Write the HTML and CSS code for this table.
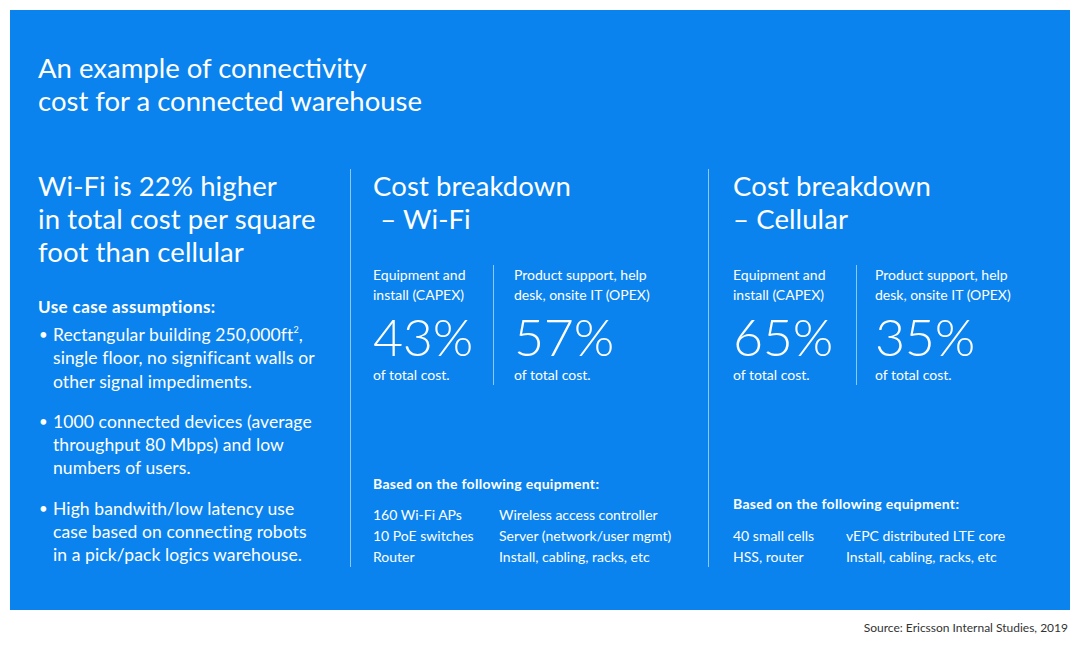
FILE: index.html
```html
<!DOCTYPE html>
<html lang="en">
<head>
<meta charset="utf-8">
<title>Connectivity cost for a connected warehouse</title>
<link rel="stylesheet" href="styles.css">
</head>
<body>
<main class="page">
  <section class="panel">
    <h1 class="title">An example of connectivity<br>cost for a connected warehouse</h1>
    <div class="columns">
      <div class="col col-summary">
        <h2 class="heading">Wi-Fi is 22% higher<br>in total cost per square<br>foot than cellular</h2>
        <p class="assume-title">Use case assumptions:</p>
        <ul class="bullets">
          <li>Rectangular building 250,000ft<sup>2</sup>,<br>single floor, no significant walls or<br>other signal impediments.</li>
          <li>1000 connected devices (average<br>throughput 80&nbsp;Mbps) and low<br>numbers of users.</li>
          <li>High bandwith/low latency use<br>case based on connecting robots<br>in a pick/pack logics warehouse.</li>
        </ul>
      </div>

      <div class="col col-breakdown">
        <h2 class="heading">Cost breakdown<br>&nbsp;– Wi-Fi</h2>
        <div class="stats">
          <div class="stat stat-capex">
            <p class="stat-label">Equipment and<br>install (CAPEX)</p>
            <p class="stat-value">43%</p>
            <p class="stat-note">of total cost.</p>
          </div>
          <div class="stat stat-opex">
            <p class="stat-label">Product support, help<br>desk, onsite IT (OPEX)</p>
            <p class="stat-value">57%</p>
            <p class="stat-note">of total cost.</p>
          </div>
        </div>
        <div class="equip">
          <p class="equip-title">Based on the following equipment:</p>
          <div class="equip-grid equip-wifi">
            <span>160 Wi-Fi APs</span><span>Wireless access controller</span>
            <span>10 PoE switches</span><span>Server (network/user mgmt)</span>
            <span>Router</span><span>Install, cabling, racks, etc</span>
          </div>
        </div>
      </div>

      <div class="col col-breakdown col-cell">
        <h2 class="heading">Cost breakdown<br>– Cellular</h2>
        <div class="stats">
          <div class="stat stat-capex">
            <p class="stat-label">Equipment and<br>install (CAPEX)</p>
            <p class="stat-value">65%</p>
            <p class="stat-note">of total cost.</p>
          </div>
          <div class="stat stat-opex">
            <p class="stat-label">Product support, help<br>desk, onsite IT (OPEX)</p>
            <p class="stat-value">35%</p>
            <p class="stat-note">of total cost.</p>
          </div>
        </div>
        <div class="equip">
          <p class="equip-title">Based on the following equipment:</p>
          <div class="equip-grid equip-cell">
            <span>40 small cells</span><span>vEPC distributed LTE core</span>
            <span>HSS, router</span><span>Install, cabling, racks, etc</span>
          </div>
        </div>
      </div>
    </div>
  </section>
  <p class="source">Source: Ericsson Internal Studies, 2019</p>
</main>
</body>
</html>
```

FILE: styles.css
```css
* { box-sizing: border-box; }

html, body {
  margin: 0;
  padding: 0;
  background: #ffffff;
}

body {
  font-family: "Lato", "Open Sans", "Liberation Sans", sans-serif;
  color: #ffffff;
}

.page {
  width: 1080px;
  height: 645px;
  padding: 10px 10px 0 10px;
}

.panel {
  width: 1060px;
  height: 600px;
  background: #0a83ee;
  padding: 41px 0 0 28px;
}

.title {
  margin: 0;
  font-weight: 400;
  font-size: 27.5px;
  line-height: 33px;
}

.columns {
  display: grid;
  grid-template-columns: 312px 358px 362px;
  margin-top: 52px;
}

.col {
  display: flex;
  flex-direction: column;
}

.col-breakdown {
  border-left: 1px solid rgba(255, 255, 255, 0.55);
  padding-left: 22px;
}

.col-cell {
  padding-left: 24px;
}

.heading {
  margin: 0;
  font-weight: 400;
  font-size: 27.5px;
  line-height: 33px;
  letter-spacing: 0.1px;
}

.assume-title {
  margin: 28px 0 0 0;
  font-weight: 700;
  font-size: 17px;
  line-height: 22px;
  letter-spacing: 0.4px;
}

.bullets {
  list-style: none;
  margin: 5px 0 0 0;
  padding: 0;
}

.bullets li {
  position: relative;
  padding-left: 15px;
  font-size: 17.5px;
  line-height: 23.3px;
  letter-spacing: 0.1px;
  margin-bottom: 17px;
}

.bullets li:last-child { margin-bottom: 0; }

.bullets li::before {
  content: "•";
  position: absolute;
  left: 1px;
  top: 0;
  font-size: 15px;
}

.bullets sup {
  font-size: 9px;
  line-height: 0;
  vertical-align: 8px;
}

.stats {
  display: flex;
  margin-top: 30px;
}

.stat-capex {
  width: 121px;
  border-right: 1px solid rgba(255, 255, 255, 0.55);
}

.stat-opex {
  padding-left: 20px;
}

.col-cell .stat-capex { width: 124px; }
.col-cell .stat-opex { padding-left: 18px; }

.stat p { margin: 0; }

.stat-label {
  font-size: 14px;
  line-height: 20px;
}

.stat-value {
  font-weight: 300;
  font-size: 52px;
  line-height: 57px;
  padding-top: 3px;
  letter-spacing: -0.3px;
}

.stat-note {
  font-size: 14px;
  line-height: 20px;
}

.equip {
  margin-top: auto;
}

.equip-title {
  margin: 0;
  font-weight: 700;
  font-size: 14px;
  line-height: 21px;
  letter-spacing: 0.3px;
}

.equip-grid {
  display: grid;
  margin-top: 10px;
  font-size: 14px;
  line-height: 21px;
}

.equip-wifi { grid-template-columns: 126px auto; }
.equip-cell { grid-template-columns: 113px auto; margin-top: 11px; }

.source {
  margin: 10px 2px 0 0;
  text-align: right;
  font-size: 12px;
  line-height: 16px;
  color: #333333;
}
```
